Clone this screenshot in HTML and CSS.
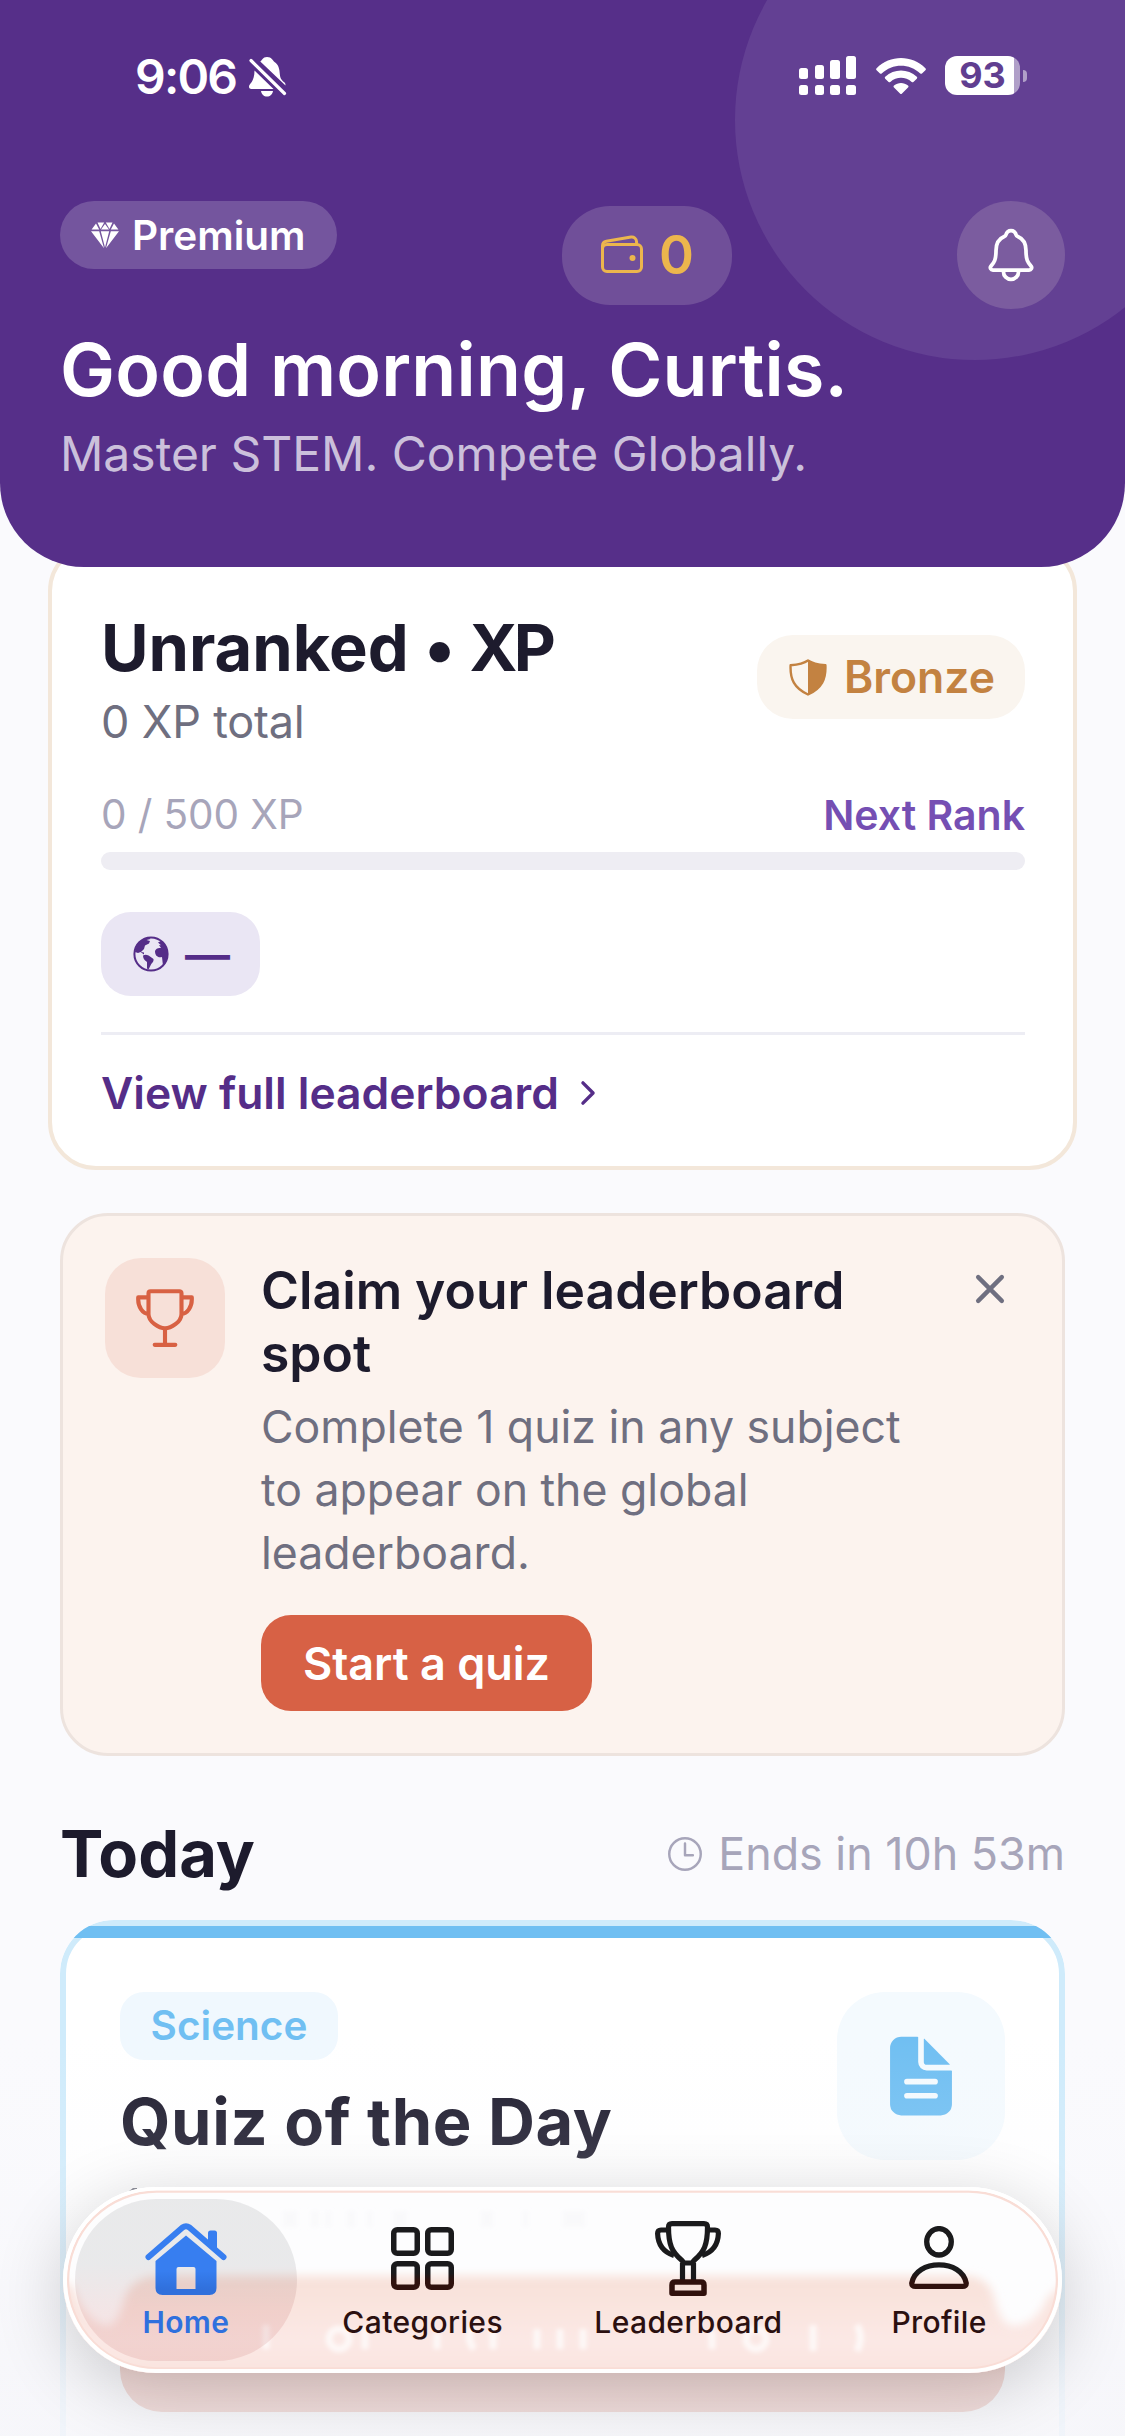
FILE: index.html
```html
<!DOCTYPE html>
<html lang="en">
<head>
<meta charset="utf-8">
<title>Home</title>
<link rel="stylesheet" href="styles.css">
</head>
<body>
<div class="screen">
  <header class="header">
    <div class="header-orb"></div>
    <div class="status-bar">
      <div class="status-left">
        <span class="time">9:06</span>
        <svg class="mute" viewBox="0 0 38 40" width="38" height="40">
          <path fill="#fff" d="M11.3 4.5C13 3.5 13.5 0 18 0c5 0 5.5 3.5 7.5 5 4 2.500 5 7 5.3 12 .3 4.5 2.200 6.5 4.7 8.5.8.8 1 1.5 1 3zM5.500 13.500L24.500 32H2.500C.5 32 0 31 0 29.500c0-2.500 5.500-4.500 5.500-16zM12 34h12c-.5 3.500-3 5.5-6 5.5s-5.500-2-6-5.500z"/>
          <path stroke="#562f89" stroke-width="7" d="M0 1.500L36 37"/>
          <path stroke="#fff" stroke-width="3.2" stroke-linecap="round" d="M2 3.500L35.500 36.5"/>
        </svg>
      </div>
      <div class="status-right">
        <svg viewBox="0 0 57 39" width="57" height="39" fill="#fff">
          <rect x="0" y="12" width="9" height="11" rx="2.5"/><rect x="16" y="9" width="9" height="14" rx="2.5"/><rect x="31" y="4" width="10" height="19" rx="2.5"/><rect x="47" y="0" width="10" height="23" rx="2.5"/>
          <rect x="0" y="29" width="9" height="10" rx="2.5"/><rect x="16" y="29" width="9" height="10" rx="2.5"/><rect x="31" y="29" width="10" height="10" rx="2.5"/><rect x="47" y="29" width="10" height="10" rx="2.5"/>
        </svg>
        <svg class="wifi" viewBox="0 0 50 36" width="50" height="36" fill="#fff">
          <path d="M.6 10.2C14-3.400 36-3.400 49.400 10.2q1 1 0 2L46 15.500q-.8.7-1.7 0C33.500 5 16.500 5 5.700 15.500q-.9.7-1.7 0L.6 12.2q-1-1 0-2z"/>
          <path d="M9.2 18.8c9-8.500 22.600-8.500 31.600 0q1 1 0 2L37.4 24q-.8.7-1.7 0c-6.200-5.600-15.200-5.600-21.400 0q-.9.7-1.7 0L9.2 20.8q-1-1 0-2z"/>
          <path d="M18 27.5c4-3.500 10-3.500 14 0q1 1 0 2L26 35.400q-1 1-2 0L18 29.5q-1-1 0-2z"/>
        </svg>
        <div class="battery"><span>93</span></div><i class="nub"></i>
      </div>
    </div>
    <div class="top-row">
      <div class="premium">
        <svg viewBox="0 0 28 27" width="28" height="27" fill="#fff">
          <path d="M5 1.500L8.2 7.500H.6zM6.500.6h6.700L9.500 7zM14 2l4 5.500h-8zM14.8.6h6.700L18.5 7zM23 1.500l4.400 6h-7.600zM0 9.2h8.2l4.800 17zM9.8 9.2h8.400L14 25.500zM19.8 9.2H28L15 26.2z"/>
        </svg>
        <span>Premium</span>
      </div>
      <div class="wallet">
        <svg viewBox="0 0 512 512" width="48" height="48" fill="none" stroke="#ecb64d" stroke-width="32">
          <rect x="48" y="144" width="416" height="288" rx="48"/>
          <path d="M411.36 144v-30A50 50 0 00352 64.9L88.64 109.85A50 50 0 0048 159v49"/>
          <circle cx="368" cy="288" r="32" fill="#ecb64d" stroke="none"/>
        </svg>
        <span>0</span>
      </div>
      <div class="bell">
        <svg viewBox="0 0 512 512" width="60" height="60" fill="none" stroke="#fff" stroke-width="32" stroke-linecap="round" stroke-linejoin="round">
          <path d="M427.68 351.43C402 320 383.87 304 383.87 217.35 383.87 138 343.35 109.73 310 96c-4.43-1.82-8.6-6-9.95-10.55C294.2 65.54 277.8 48 256 48s-38.21 17.55-44 37.47c-1.35 4.6-5.52 8.71-9.95 10.53-33.39 13.75-73.87 41.92-73.87 121.35C128.13 304 110 320 84.32 351.43 73.68 364.45 83 384 101.61 384h308.88c18.51 0 27.77-19.61 17.19-32.57zM320 384v16a64 64 0 01-128 0v-16"/>
        </svg>
      </div>
    </div>
    <h1 class="greeting">Good morning, Curtis.</h1>
    <p class="tagline">Master STEM. Compete Globally.</p>
  </header>

  <section class="rank-card">
    <div class="rank-head">
      <div>
        <h2 class="rank-title">Unranked • <span class="unit">XP</span></h2>
        <p class="rank-total">0 XP total</p>
      </div>
      <div class="tier">
        <svg viewBox="0 0 38 37" width="38" height="37">
          <path fill="none" stroke="#c38241" stroke-width="2.4" stroke-linejoin="round" d="M19 1.400C14 4.800 8 5.600 1.6 6.300 1 20 5 29 19 35.5 33 29 37 20 36.400 6.300 30 5.600 24 4.800 19 1.400z"/>
          <path fill="#c38241" d="M19 1C24 4.800 30 5.600 36.400 6.300 37 20 33 29 19 36z"/>
        </svg>
        <span>Bronze</span>
      </div>
    </div>
    <div class="progress-labels"><span class="xp">0 / 500 XP</span><span class="next">Next Rank</span></div>
    <div class="progress"></div>
    <div class="globe-pill">
      <svg viewBox="0 0 36 36" width="36" height="36">
        <circle cx="18" cy="18" r="16.6" fill="none" stroke="#552d88" stroke-width="2"/>
        <path fill="#552d88" d="M2 16C3 8 9 2 16 1.500l1.500 1.500-4 1 3.500 1-1 2.500-4 2-1 3.500-3 3 3 .5v2L7.500 16 5 17zM10 19.5c3-1.500 5-.5 7 1l3.500 2.500c.5 3-2 4-3 6.500l-2 4-1.500-1v-6.500c-3-2-4-4-4-6.500zM22 15c1-2.500 3-3.500 6-3l-2-3 2 .3-3-2.800 3-1.500c4 3 6.500 8 6.500 13s-1.500 9-4.500 12l-1-9c-4 1-7-1-7-6z"/>
      </svg>
      <span>—</span>
    </div>
    <a class="board-link"><span>View full leaderboard</span>
      <svg viewBox="0 0 512 512" width="36" height="36" fill="none" stroke="#552d88" stroke-width="48" stroke-linecap="round" stroke-linejoin="round"><path d="M184 112l144 144-144 144"/></svg>
    </a>
  </section>

  <section class="claim-card">
    <div class="claim-icon">
      <svg viewBox="0 0 512 512" width="66" height="66" fill="none" stroke="#d86143" stroke-width="32" stroke-linecap="round" stroke-linejoin="round">
        <path d="M176 464h160M256 464V336M384 224c0-50.64-.08-134.63-.12-160a16 16 0 00-16-16l-223.79.26a16 16 0 00-16 15.95c0 30.58-.13 129.17-.13 159.79 0 64.28 83 112 128 112S384 288.28 384 224zM128 96H48v16c0 55.22 33.55 112 80 112M384 96h80v16c0 55.22-33.55 112-80 112"/>
      </svg>
    </div>
    <div class="claim-body">
      <h3>Claim your leaderboard spot</h3>
      <p>Complete 1 quiz in any subject to appear on the global leaderboard.</p>
      <button class="start">Start a quiz</button>
    </div>
    <div class="close">
      <svg viewBox="0 0 512 512" width="54" height="54" stroke="#6f6f80" stroke-width="42" stroke-linecap="round"><path d="M368 368L144 144M368 144L144 368"/></svg>
    </div>
  </section>

  <div class="today-row">
    <h2>Today</h2>
    <div class="ends">
      <svg viewBox="0 0 512 512" width="42" height="42" fill="none" stroke="#a7a5ba" stroke-width="30" stroke-linecap="round" stroke-linejoin="round"><path d="M256 64C150 64 64 150 64 256s86 192 192 192 192-86 192-192S362 64 256 64zM256 128v144h96"/></svg>
      <span>Ends in 10h 53m</span>
    </div>
  </div>

  <section class="quiz-card">
    <div class="accent"></div>
    <div class="quiz-head">
      <div>
        <span class="chip">Science</span>
        <h2>Quiz of the Day</h2>
      </div>
      <div class="doc">
        <svg viewBox="0 0 512 512" width="90" height="90" fill="#70bff2">
          <path d="M428 224H288a48 48 0 01-48-48V36a4 4 0 00-4-4h-92a64 64 0 00-64 64v320a64 64 0 0064 64h224a64 64 0 0064-64V228a4 4 0 00-4-4zm-92 160H176a16 16 0 010-32h160a16 16 0 010 32zm0-80H176a16 16 0 010-32h160a16 16 0 010 32z"/>
          <path d="M419.22 188.59L275.41 44.78a2 2 0 00-3.41 1.41V176a16 16 0 0016 16h129.81a2 2 0 001.41-3.41z"/>
        </svg>
      </div>
    </div>
    <svg class="peek" viewBox="0 0 40 10" width="40" height="10" fill="#777885"><path d="M0 7L9 0h4v7zM28 3q6-5 12 0z"/></svg>
    <div class="cta"></div>
  </section>

  <div class="fade"></div>

  <nav class="tabbar">
    <svg class="glass" viewBox="0 0 999 186" width="999" height="186">
      <defs>
        <filter id="soft" x="-10%" y="-30%" width="120%" height="160%"><feGaussianBlur stdDeviation="5"/></filter>
        <filter id="soft2" x="-10%" y="-30%" width="120%" height="160%"><feGaussianBlur stdDeviation="2"/></filter>
        <linearGradient id="pink" x1="0" y1="0" x2="0" y2="1"><stop offset="0" stop-color="#f8e1d9"/><stop offset=".6" stop-color="#fbe8e5"/><stop offset="1" stop-color="#f9e2dc"/></linearGradient>
      </defs>
      <rect width="999" height="186" fill="#fdfdfe"/>
      <path filter="url(#soft)" fill="url(#pink)" d="M95 89H905Q926 91 931 110Q938 140 952 139Q975 136 985 110L1010 90V200H-10V90L10 100Q22 136 45 139Q56 136 61 112Q68 90 95 89z"/>
      <g filter="url(#soft2)" fill="none" stroke="#fff" stroke-opacity=".7" stroke-width="7">
        <path d="M203 138v24M302 140v22M374 146v16M409 140q-6 12 2 22M430 142v20M474 142v20M497 142v20M520 142v20M649 144v18M690 138M750 138v26M794 138q7 12 0 26"/>
        <ellipse cx="276" cy="152" rx="10" ry="10"/><ellipse cx="693" cy="152" rx="10" ry="10"/>
      </g>
      <g filter="url(#soft2)" fill="#f9f9fb"><path d="M220 24h14v16h-14zM248 24h8v16h-8zM262 24h6v16h-6zM284 24h8v16h-8zM304 24h5v16h-5zM330 24h14v16h-14zM418 24h12v16h-12zM460 24h5v16h-5zM500 24h22v16h-22z"/></g>
      <rect x="5" y="4.5" width="989" height="177" rx="88.5" fill="none" stroke="#f9ddd6" stroke-width="2.5"/>
      <rect x="2" y="1.5" width="995" height="182.5" rx="91.5" fill="none" stroke="#fff" stroke-width="4"/>
    </svg>
    <div class="tab home">
      <svg viewBox="0 0 82 72" width="82" height="72">
        <defs><linearGradient id="blue" x1="0" y1="0" x2="0" y2="1"><stop offset=".6" stop-color="#377ef0"/><stop offset=".9" stop-color="#3070dc"/></linearGradient></defs>
        <path fill="none" stroke="#377ef0" stroke-width="6" stroke-linecap="round" stroke-linejoin="round" d="M3.500 34L37.5 4.500Q41 2 44.5 4.500L78.5 34"/>
        <path fill="#377ef0" d="M63 22V10q0-2.500 2.500-2.500h4q2.500 0 2.500 2.500v20z"/>
        <path fill="url(#blue)" fill-rule="evenodd" d="M10.500 38L41 12.5 71.5 38v27q0 7-7 7h-47q-7 0-7-7zM33.5 44q-2 0-2 2v20h19V46q0-2-2-2z"/>
      </svg>
      <span>Home</span>
    </div>
    <div class="tab categories">
      <svg viewBox="0 0 63 63" width="63" height="63" fill="none" stroke-width="5.5">
        <g stroke="#1a1a1c"><rect x="2.75" y="2.75" width="23.5" height="23.5" rx="3.5"/><rect x="36.75" y="2.75" width="23.5" height="23.5" rx="3.5"/></g>
        <defs><linearGradient id="dark" gradientUnits="userSpaceOnUse" x1="0" y1="46" x2="0" y2="54"><stop offset="0" stop-color="#1a1a1c"/><stop offset="1" stop-color="#30110d"/></linearGradient></defs>
        <g stroke="url(#dark)"><rect x="2.75" y="36.75" width="23.5" height="23.5" rx="3.5"/><rect x="36.75" y="36.75" width="23.5" height="23.5" rx="3.5"/></g>
      </svg>
      <span>Categories</span>
    </div>
    <div class="tab leader">
      <svg viewBox="0 0 66 75" width="66" height="75" fill="none" stroke="#1a1a1c" stroke-width="5.2" stroke-linejoin="round">
        <path d="M17 2.600h32q3.500 0 3.500 3.500C52.5 24 49 31 39.500 39q-2.500 3-2.500 3h-8q0 0-2.500-3C17 31 13.500 24 13.500 6.100q0-3.500 3.500-3.500z"/>
        <path d="M14 9H6Q2.600 9 2.600 12.500C3 24 8 31 19 34.5M52 9h8q3.400 0 3.400 3.500C63 24 58 31 47 34.5M27.500 42v17M38.5 42v17"/>
        <path stroke="#30110d" stroke-width="5.5" d="M20 61h26q3 0 3 3v8.200H17V64q0-3 3-3z"/>
      </svg>
      <span>Leaderboard</span>
    </div>
    <div class="tab profile">
      <svg viewBox="0 0 60 64" width="60" height="64" fill="none" stroke="#1a1a1c" stroke-width="5.3">
        <defs><linearGradient id="dark2" gradientUnits="userSpaceOnUse" x1="0" y1="46" x2="0" y2="56"><stop offset="0" stop-color="#1a1a1c"/><stop offset="1" stop-color="#30110d"/></linearGradient></defs>
        <ellipse cx="30" cy="15.8" rx="12.3" ry="13.2"/>
        <path stroke="url(#dark2)" d="M6.500 60.300Q2.500 60.300 2.800 57C5 45 17 38.800 30 38.800S55 45 57.2 57q.3 3.300-3.700 3.300z"/>
      </svg>
      <span>Profile</span>
    </div>
  </nav>
</div>
</body>
</html>
```

FILE: styles.css
```css
* { box-sizing: border-box; margin: 0; padding: 0; }
body { font-family: Inter, "Liberation Sans", sans-serif; }
svg { display: block; flex: none; }
span, h1, h2, h3 { white-space: nowrap; }

.screen { position: relative; width: 1125px; height: 2436px; overflow: hidden; background: #fafafd; }

.header { position: relative; z-index: 2; height: 567px; padding: 54px 60px 0; overflow: hidden; border-radius: 0 0 84px 84px; background: #562f89; color: #fff; }
.header-orb { position: absolute; top: -120px; right: -90px; width: 480px; height: 480px; border-radius: 50%; background: #634093; }
.status-bar, .top-row, .greeting, .tagline { position: relative; }
.status-bar { display: flex; justify-content: space-between; align-items: center; height: 45px; padding: 0 38px 0 75px; }
.status-left { display: flex; align-items: center; gap: 12px; }
.time { width: 102px; font-size: 48px; font-weight: 600; line-height: 45px; letter-spacing: -1.8px; }
.status-right { display: flex; align-items: center; margin-top: -2px; }
.wifi { margin-left: 20px; }
.battery { width: 75px; height: 39px; margin-left: 19px; border-radius: 12px; background: linear-gradient(90deg, #fff 69px, #b09fc8 69px); color: #613e90; text-align: center; font-size: 36px; font-weight: 700; line-height: 39px; }
.nub { width: 4px; height: 12px; margin-left: 3px; border-radius: 0 4px 4px 0; background: #b09fc8; }

.top-row { display: flex; justify-content: space-between; align-items: center; height: 108px; margin-top: 102px; }
.premium { display: flex; align-items: center; gap: 13px; align-self: flex-start; width: 277px; height: 68px; padding-left: 31px; border-radius: 34px; background: #74559e; font-size: 40.5px; font-weight: 600; }
.wallet { display: flex; align-items: center; gap: 13px; width: 170px; height: 99px; padding-left: 36px; border-radius: 48px; background: #704f99; color: #ecb64d; font-size: 53px; font-weight: 600; }
.bell { display: grid; place-items: center; width: 108px; height: 108px; border-radius: 50%; background: #7b5c9f; }
.greeting { margin-top: 16px; font-size: 73.5px; font-weight: 600; line-height: 90px; letter-spacing: .2px; }
.tagline { margin-top: 6px; color: #cbc0db; font-size: 48px; line-height: 66px; }

.rank-card { width: 1029px; height: 627px; margin: -24px 48px 0; padding: 59px 48px 0 49px; border: 4px solid #f3e7da; border-radius: 48px; background: #fff; }
.rank-head { display: flex; justify-content: space-between; align-items: center; height: 144px; }
.rank-title, .today-row h2, .quiz-head h2 { color: #1d1b2d; font-size: 65px; font-weight: 700; line-height: 84px; }
.unit { margin-left: -1px; letter-spacing: -3.5px; }
.rank-total { margin-top: 4px; color: #6f6f80; font-size: 45px; line-height: 56px; letter-spacing: -.2px; }
.tier { display: flex; align-items: center; gap: 17px; width: 268px; height: 84px; margin-top: -2px; padding-left: 32px; border-radius: 36px; background: #faf5ef; color: #c38241; font-size: 44.5px; font-weight: 600; }
.progress-labels { display: flex; justify-content: space-between; margin-top: 40px; font-size: 40.5px; line-height: 50px; }
.xp { color: #a7a5ba; letter-spacing: -.1px; }
.next { color: #754fb3; font-weight: 600; font-size: 41px; }
.progress { height: 18px; margin-top: 12px; border-radius: 9px; background: #eeedf3; }
.globe-pill { display: flex; align-items: center; gap: 16px; width: 159px; height: 84px; margin-top: 42px; padding-left: 32px; border-radius: 30px; background: #eae6f4; color: #552d88; font-size: 45px; font-weight: 600; }
.board-link { display: flex; align-items: center; gap: 11px; margin-top: 36px; padding-top: 31px; border-top: 3px solid #ededf4; color: #552d88; font-size: 44.4px; font-weight: 600; line-height: 54px; }

.claim-card { display: flex; height: 543px; margin: 43px 60px 0; padding: 42px; border: 3px solid #ede3de; border-radius: 48px; background: #fcf3ee; }
.claim-icon { display: grid; place-items: center; flex: none; width: 120px; height: 120px; border-radius: 36px; background: #f7e0d8; }
.claim-body { width: 664px; margin-left: 36px; }
.claim-body h3 { padding-top: 1px; white-space: normal; color: #1d1b2d; font-size: 51.6px; font-weight: 600; line-height: 63px; }
.claim-body p { margin-top: 11px; color: #6f6f80; font-size: 44.6px; line-height: 63px; }
.start { display: block; width: 331px; height: 96px; margin-top: 30px; border: 0; border-radius: 30px; background: #d76145; color: #fff; font: 600 45px/97px Inter, sans-serif; white-space: nowrap; }
.close { display: grid; place-items: center; width: 60px; height: 60px; margin: 1px 0 0 auto; }

.today-row { display: flex; justify-content: space-between; align-items: center; height: 84px; margin: 56px 60px 0; }
.ends { display: flex; align-items: center; gap: 12px; color: #a7a5ba; font-size: 44.8px; }

.quiz-card { position: relative; height: 600px; margin: 24px 60px 0; padding: 66px 54px 0; border: 6px solid #cfebfb; border-radius: 54px; background: #fff; clip-path: inset(0 round 54px); }
.accent { position: absolute; top: 0; left: -6px; right: -6px; height: 12px; background: #70bff2; }
.quiz-head { display: flex; justify-content: space-between; height: 170px; }
.quiz-head h2 { margin-top: 20px; letter-spacing: .6px; }
.chip { display: block; width: 218px; height: 68px; border-radius: 24px; background: #f0f8fe; color: #70bff2; text-align: center; font-size: 40.5px; font-weight: 600; line-height: 68px; }
.doc { display: grid; place-items: center; width: 168px; height: 168px; border-radius: 48px; background: #f4fafe; }
.peek { position: absolute; left: 58px; top: 262px; }
.cta { height: 136px; margin-top: 114px; border-radius: 42px; background: #d76145; }

.fade { position: absolute; left: 0; right: 0; bottom: 0; height: 400px; background: linear-gradient(rgba(246,246,250,0), rgba(246,246,250,.12) 27%, rgba(246,246,250,.3) 49%, rgba(246,246,250,.8) 85%, rgba(246,246,250,.86)); }

.tabbar { position: absolute; left: 63px; top: 2187px; display: flex; width: 999px; height: 186px; padding: 12px; border-radius: 93px; box-shadow: 0 16px 70px rgba(0,0,0,.19); }
.glass { position: absolute; inset: 0; border-radius: 93px; }
.tab { position: relative; display: flex; flex-direction: column; align-items: center; justify-content: flex-end; height: 162px; padding-bottom: 19px; color: #2b1010; font-size: 30px; font-weight: 500; line-height: 40px; letter-spacing: .4px; }
.home { width: 222px; border-radius: 81px; background: linear-gradient(rgba(20,25,30,.085) 40%, rgba(160,20,20,.1) 70%); color: #2f70de; font-weight: 600; }
.home svg { margin-bottom: 7px; }
.categories { width: 252px; }
.categories svg { margin-bottom: 12px; }
.leader { width: 280px; }
.leader svg { margin-bottom: 6px; }
.profile { width: 222px; }
.profile svg { margin-bottom: 12px; }
```
